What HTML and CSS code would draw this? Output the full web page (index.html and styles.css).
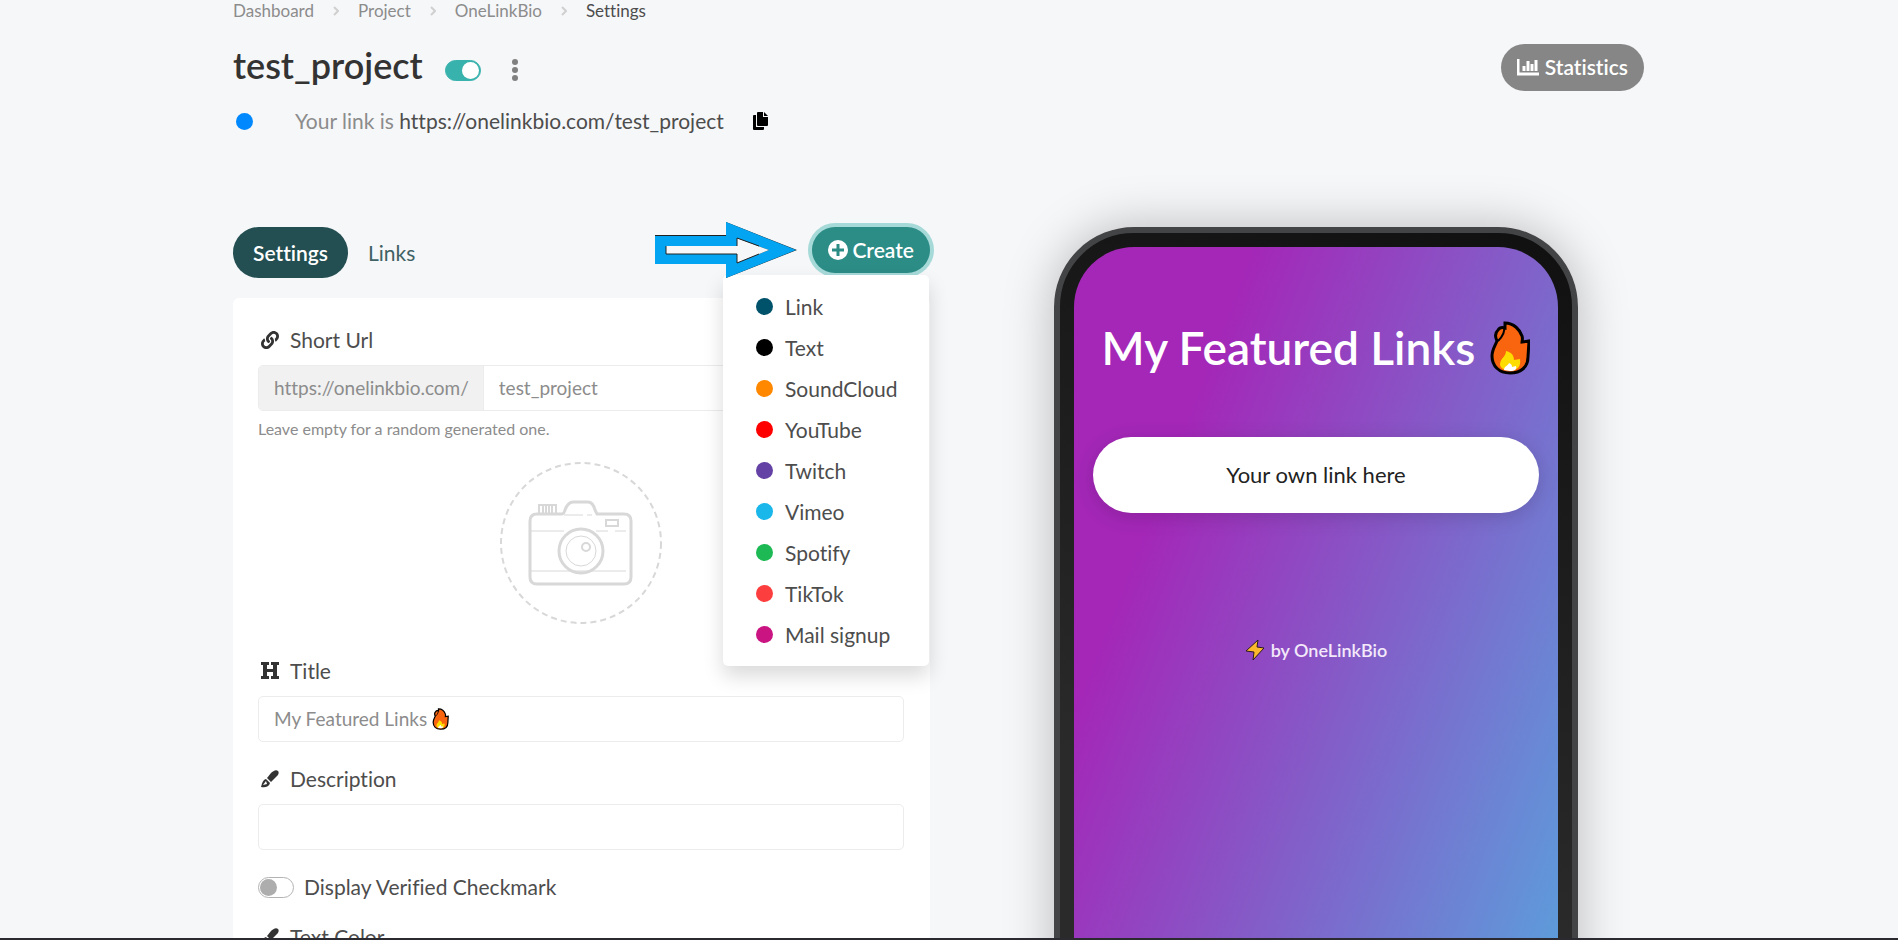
FILE: index.html
```
<!DOCTYPE html>
<html lang="en">
<head>
  <meta charset="UTF-8">
  <meta name="viewport" content="width=device-width, initial-scale=1.0">
  <title>test_project - OneLinkBio</title>
  <link rel="stylesheet" href="styles.css">
</head>
<body>
  <!-- shared icons -->
  <svg class="sprite" aria-hidden="true">
    <symbol id="fire" viewBox="0 0 40 54">
      <path d="M15 2 C24 2 30 9 32 15 C33 18 32 20 32 21 L39 20 L38 36 C38 46 31 52 20 52 C9 52 2 45 2 35 C2 29 5 25 7 20 C5 16 5 12 8 9 C10 6 12 6 15 7 Z" fill="#f9650f" stroke="#000" stroke-width="3"/>
      <path d="M14 6 C15 10 14 14 8 20" fill="none" stroke="#000" stroke-width="2"/>
      <path d="M10 44 C10 37 16 36 16 30 C21 31 24 34 24 39 L30 38 C31 46 28 49 20 49 C13 49 11 47 10 44 Z" fill="#ffdc00"/>
      <path d="M14 49 C14 45 18 45 19 42 C22 43 22 45 22 46 L26 45 C27 48 25 50 20 50 Z" fill="#fff"/>
    </symbol>
    <symbol id="brush" viewBox="0 0 18 18">
      <path d="M17 1 C15 -1 12 1 10 3 L6 8 L10 12 L16 6 C18 4 18 2 17 1 Z"/>
      <path d="M5 9 L9 13 C8 17 4 18 0 17 C1 15 1 10 5 9 Z M5 11 L2 15 L6 14 Z" fill-rule="evenodd"/>
    </symbol>
    <symbol id="chevron" viewBox="0 0 6 10">
      <path d="M1 1 L5 5 L1 9" fill="none" stroke="currentColor" stroke-width="2"/>
    </symbol>
  </svg>

  <main class="container">
    <nav class="breadcrumb">
      <a href="#">Dashboard</a>
      <svg class="chevron"><use href="#chevron"/></svg>
      <a href="#">Project</a>
      <svg class="chevron"><use href="#chevron"/></svg>
      <a href="#">OneLinkBio</a>
      <svg class="chevron"><use href="#chevron"/></svg>
      <span class="current">Settings</span>
    </nav>

    <header class="header">
      <div class="heading">
        <h1>test_project</h1>
        <input type="checkbox" class="switch" aria-label="Project enabled" checked>
        <button class="more" aria-label="More">
          <svg viewBox="0 0 6 22" width="6" height="22"><circle cx="3" cy="3" r="3"/><circle cx="3" cy="11" r="3"/><circle cx="3" cy="19" r="3"/></svg>
        </button>
      </div>
      <button class="stats">
        <svg viewBox="0 0 22 17" width="22" height="17"><path d="M1 0 V15 H22" fill="none" stroke="#fff" stroke-width="3"/><path d="M7 12 V7 M11 12 V2 M15 12 V5 M19 12 V1" stroke="#fff" stroke-width="3"/></svg>
        Statistics
      </button>
    </header>

    <div class="link-row">
      <span class="dot dot-blue"></span>
      <p>Your link is <a href="#">https://onelinkbio.com/test_project</a></p>
      <button class="copy" aria-label="Copy">
        <svg viewBox="0 0 15 18" width="15" height="18"><path d="M4 1 Q4 0 5 0 H10 V5 H15 V13 Q15 14 14 14 H5 Q4 14 4 13 Z M11 0 L15 4 H11 Z M0 4 Q0 3 1 3 H3 V15 H11 V17 Q11 18 10 18 H1 Q0 18 0 17 Z"/></svg>
      </button>
    </div>

    <div class="columns">
      <section>
        <div class="toolbar">
          <a href="#" class="tab active">Settings</a>
          <a href="#" class="tab">Links</a>
          <div class="create">
            <svg class="arrow" viewBox="0 0 142 56" width="142" height="56">
              <path d="M0 13 H71 V0 L142 28 L71 56 V42 H0 Z" fill="#222"/>
              <path d="M0 14 H71 V0 L141 28 L71 56 V42 H0 Z M11 24 V32 H82 V41 L114 28 L82 16 V24 Z" fill="#03a5f3" fill-rule="evenodd"/>
              <path d="M11 24 V32 H82 V41 L114 28 L82 16 V24 Z" fill="#f6f7f9"/>
              <path d="M11 24 V32 H82 V41 L104 32 M82 24 V16 L104 24" fill="none" stroke="#222" stroke-width="1"/>
            </svg>
            <button class="create-button">
              <svg viewBox="0 0 20 20" width="20" height="20"><circle cx="10" cy="10" r="10" fill="#fff"/><path d="M10 4 V16 M4 10 H16" stroke="#2b8b85" stroke-width="3"/></svg>
              Create
            </button>
            <div class="dropdown">
              <a href="#"><span class="dot dot-link"></span>Link</a>
              <a href="#"><span class="dot dot-text"></span>Text</a>
              <a href="#"><span class="dot dot-soundcloud"></span>SoundCloud</a>
              <a href="#"><span class="dot dot-youtube"></span>YouTube</a>
              <a href="#"><span class="dot dot-twitch"></span>Twitch</a>
              <a href="#"><span class="dot dot-vimeo"></span>Vimeo</a>
              <a href="#"><span class="dot dot-spotify"></span>Spotify</a>
              <a href="#"><span class="dot dot-tiktok"></span>TikTok</a>
              <a href="#"><span class="dot dot-mail"></span>Mail signup</a>
            </div>
          </div>
        </div>

        <form class="card">
          <label class="label" for="url">
            <svg viewBox="0 0 512 512" width="18" height="18"><path d="M326.612 185.391c59.747 59.809 58.927 155.698.36 214.59-.11.12-.24.25-.36.37l-67.2 67.2c-59.27 59.27-155.699 59.262-214.96 0-59.27-59.26-59.27-155.7 0-214.96l37.106-37.106c9.84-9.84 26.786-3.3 27.294 10.606.648 17.722 3.826 35.527 9.69 52.721 1.986 5.822.567 12.262-3.783 16.612l-13.087 13.087c-28.026 28.026-28.905 73.66-1.155 101.96 28.024 28.579 74.086 28.749 102.325.51l67.2-67.19c28.191-28.191 28.073-73.757 0-101.83-3.701-3.694-7.429-6.564-10.341-8.569a16.037 16.037 0 0 1-6.947-12.606c-.396-10.567 3.348-21.456 11.698-29.806l21.054-21.055c5.521-5.521 14.182-6.199 20.584-1.731a152.482 152.482 0 0 1 20.522 17.197zM467.547 44.449c-59.261-59.262-155.69-59.27-214.96 0l-67.2 67.2c-.12.12-.25.25-.36.37-58.566 58.892-59.387 154.781.36 214.59a152.454 152.454 0 0 0 20.521 17.196c6.402 4.468 15.064 3.789 20.584-1.731l21.054-21.055c8.35-8.35 12.094-19.239 11.698-29.806a16.037 16.037 0 0 0-6.947-12.606c-2.912-2.005-6.64-4.875-10.341-8.569-28.073-28.073-28.191-73.639 0-101.83l67.2-67.19c28.239-28.239 74.3-28.069 102.325.51 27.75 28.3 26.872 73.934-1.155 101.96l-13.087 13.087c-4.35 4.35-5.769 10.79-3.783 16.612 5.864 17.194 9.042 34.999 9.69 52.721.509 13.906 17.454 20.446 27.294 10.606l37.106-37.106c59.271-59.259 59.271-155.699.001-214.959z"/></svg>
            Short Url
          </label>
          <div class="input-group">
            <span class="addon">https://onelinkbio.com/</span>
            <input type="text" id="url" value="test_project">
          </div>
          <small class="help">Leave empty for a random generated one.</small>

          <button type="button" class="upload" aria-label="Upload image">
            <svg viewBox="0 0 162 162" fill="none" stroke="#d8d8d8">
              <circle cx="81" cy="81" r="80" stroke-width="2" stroke-dasharray="6 4"/>
              <g stroke-width="3">
                <path d="M37 52 H62 Q64 52 65 48 Q68 40 73 40 H88 Q93 40 95 48 L97 52 H124 Q131 52 131 59 V115 Q131 122 124 122 H37 Q30 122 30 115 V59 Q30 52 37 52 Z"/>
                <circle cx="81" cy="89" r="22"/>
              </g>
              <path d="M39 51 V43 H56 V51 M43 44 V51 M46 44 V51 M49 44 V51 M52 44 V51" stroke-width="2"/>
              <path d="M64 53 H83 M87 53 H92 M31 69 H64 M96 69 H108 M115 69 H126 M31 109 H126" stroke-width="1"/>
              <rect x="106" y="58" width="12" height="6" stroke-width="2"/>
              <circle cx="81" cy="89" r="15" stroke-width="1"/>
              <circle cx="86" cy="85" r="4" stroke-width="2"/>
            </svg>
          </button>

          <label class="label" for="title">
            <svg viewBox="0 0 18 18" width="18" height="18"><path d="M0 0 H8 V3 H6 V7 H12 V3 H10 V0 H18 V3 H16 V14 H18 V17 H10 V14 H12 V10 H6 V14 H8 V17 H0 V14 H2 V3 H0 Z"/></svg>
            Title
          </label>
          <div class="field">
            <input type="text" id="title" value="My Featured Links">
            <svg class="fire-small"><use href="#fire"/></svg>
          </div>

          <label class="label" for="description">
            <svg width="18" height="18"><use href="#brush"/></svg>
            Description
          </label>
          <div class="field"><input type="text" id="description"></div>

          <div class="check">
            <input type="checkbox" class="switch" id="verified">
            <label for="verified">Display Verified Checkmark</label>
          </div>

          <label class="label" for="color">
            <svg width="18" height="18"><use href="#brush"/></svg>
            Text Color
          </label>
          <div class="field"><input type="text" id="color"></div>
        </form>
      </section>

      <section class="phone">
        <div class="screen">
          <h2>My Featured Links <svg class="fire"><use href="#fire"/></svg></h2>
          <a href="#" class="bio-link">Your own link here</a>
          <a href="#" class="branding">
            <svg viewBox="0 0 20 22" width="20" height="22"><path d="M13 1 L1 12 L9 13 L8 21 L19 9 L12 8 Z" fill="#fdb92c" stroke="#2a1a20" stroke-width="1"/></svg>
            by OneLinkBio
          </a>
        </div>
      </section>
    </div>
  </main>
</body>
</html>
```
FILE: styles.css
```
* {
  box-sizing: border-box; }
body {
  font-family: Lato, sans-serif; font-size: 21px; line-height: 30px; color: #4d4d4d;
  font-variant-ligatures: none;
  margin: 0; padding-right: 21px; height: 100vh; overflow: hidden;
  background: #f6f7f9; border-bottom: 2px solid #2b2a30; }
a {
  color: inherit; text-decoration: none; }
button {
  font: inherit; border: none; background: none; padding: 0; cursor: pointer; }
svg {
  flex: none; }
.sprite {
  display: none; }
.container {
  max-width: 1411px; margin: 0 auto; }

.breadcrumb {
  display: flex; align-items: center; font-size: 17px; line-height: 22px; color: #8c8c8c; }
.chevron {
  width: 6px; height: 10px; margin: 0 19px; color: #d0d0d0; }
.current {
  color: #4d4d4d; }

.header {
  display: flex; justify-content: space-between; align-items: center; margin-top: 20px; }
.heading {
  display: flex; align-items: center; }
h1 {
  font-size: 36px; line-height: 46px; font-weight: 600; color: #333; margin: 0 22px 4px 0; }
.switch {
  appearance: none; width: 36px; height: 21px; margin: 0; border-radius: 11px;
  border: 1px solid #b3b3b3; background: #fff; display: flex; align-items: center; padding: 1px; }
.switch::before {
  content: ""; width: 17px; height: 17px; border-radius: 50%; background: #adadad; }
.switch:checked {
  background: #38b2ac; border-color: #38b2ac; justify-content: flex-end; }
.switch:checked::before {
  background: #fff; }
.heading .switch {
  margin-top: 6px; }
.more {
  display: flex; margin: 6px 0 0 31px; fill: #808080; }
.stats {
  display: flex; align-items: center; gap: 6px; height: 47px; padding: 0 16px;
  border-radius: 24px; background: #868686; color: #fff; font-weight: 600; }

.link-row {
  display: flex; align-items: center; margin-top: 14px; color: #8c8c8c; }
.link-row p {
  margin: 0 29px 0 42px; }
.link-row a {
  color: #4d4d4d; }
.copy {
  display: flex; }
.dot {
  width: 17px; height: 17px; border-radius: 50%; flex: none; }
.dot-blue { background: #0088ff; margin-left: 3px; }
.dot-link { background: #00526b; }
.dot-text { background: #000; }
.dot-soundcloud { background: #ff8800; }
.dot-youtube { background: #ff0000; }
.dot-twitch { background: #6441a5; }
.dot-vimeo { background: #1ab7ea; }
.dot-spotify { background: #1db954; }
.dot-tiktok { background: #fd3e3e; }
.dot-mail { background: #c91482; }

.columns {
  display: grid; grid-template-columns: 697fr 656fr; gap: 58px; margin-top: 91px; }
.toolbar {
  display: flex; align-items: flex-start; }
.tab {
  padding: 11px 20px 10px; border-radius: 26px; color: #3f6264; }
.tab.active {
  background: #234e52; color: #fff; font-weight: 600; }
.create {
  position: relative; margin-left: auto; }
.create-button {
  display: flex; align-items: center; gap: 4px; height: 46px; padding: 0 16px;
  border-radius: 23px; background: #2c8c86; color: #fff; font-weight: 600;
  box-shadow: 0 0 0 4px #a6dad8; }
.arrow {
  position: absolute; top: -5px; right: 133px; z-index: 3; }
.dropdown {
  position: absolute; top: 48px; right: 1px; z-index: 2; width: 206px; padding: 11px 0;
  background: #fff; border-radius: 5px; box-shadow: 0 10px 20px rgba(0, 0, 0, 0.15); }
.dropdown a {
  display: flex; align-items: center; gap: 12px; height: 41px; padding-left: 33px; }

.card {
  margin-top: 20px; padding: 27px 26px 27px 25px; background: #fff; border-radius: 6px; }
.label {
  display: flex; align-items: center; gap: 11px; margin-bottom: 10px; color: #4d4d4d; }
.label svg {
  fill: #333; margin-left: 3px; }
.input-group, .field {
  display: flex; align-items: center; height: 46px; border: 1px solid #ececec; border-radius: 5px;
  font-size: 19px; color: #8c8c8c; overflow: hidden; }
.addon {
  padding: 0 14px 0 15px; line-height: 44px; background: #f1f1f1; border-right: 1px solid #ececec; }
.card input[type="text"] {
  flex: 1; font: inherit; color: inherit; border: none; outline: none; background: none;
  padding: 0 0 0 15px; }
.card #title {
  flex: none; width: 173px; }
.fire-small {
  width: 17px; height: 22px; }
.help {
  display: block; font-size: 16px; line-height: 24px; margin-top: 6px; color: #8c8c8c; }
.upload {
  display: block; width: 162px; height: 162px; margin: 21px auto 32px; }
.field {
  margin-bottom: 22px; }
.check {
  display: flex; align-items: center; gap: 10px; margin-bottom: 20px; }

.phone {
  width: 80%; height: 1000px; margin: 0 auto; padding: 14px; border: 6px solid #434446;
  border-radius: 80px; background: linear-gradient(200deg, #101010, #2a2a2a 60%);
  box-shadow: 0 0 50px rgba(0, 0, 0, 0.25); }
.screen {
  height: 960px; padding: 71px 19px; border-radius: 60px; text-align: center;
  display: flex; flex-direction: column;
  background: linear-gradient(111deg, #a427b8 21%, #51b0e1); }
h2 {
  display: flex; justify-content: center; align-items: center; gap: 15px; margin: 0 0 59px;
  font-size: 46px; line-height: 60px; font-weight: 600; color: #fff; white-space: nowrap; }
.fire {
  width: 40px; height: 54px; }
.bio-link {
  height: 76px; line-height: 76px; border-radius: 38px; background: #fff; color: #222;
  font-size: 22px; box-shadow: 0 4px 20px rgba(0, 0, 0, 0.15); }
.branding {
  display: flex; justify-content: center; align-items: center; gap: 6px; margin-top: 122px;
  font-size: 18px; font-weight: 600; color: #f3e9fa; }
```
